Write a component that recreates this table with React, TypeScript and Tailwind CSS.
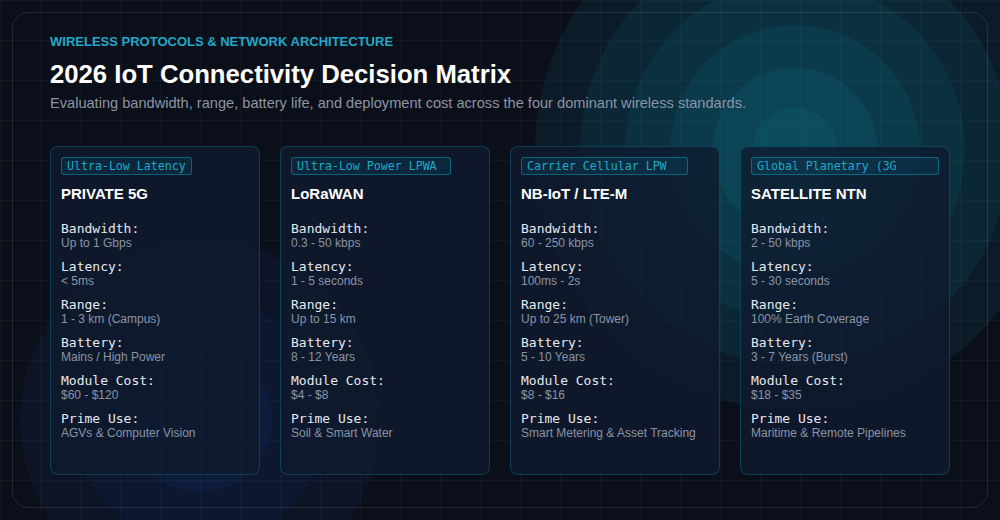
const protocols = [
  {
    tag: "Ultra-Low Latency",
    tagWidth: "w-[131px]",
    name: "PRIVATE 5G",
    specs: [
      ["Bandwidth:", "Up to 1 Gbps"],
      ["Latency:", "< 5ms"],
      ["Range:", "1 - 3 km (Campus)"],
      ["Battery:", "Mains / High Power"],
      ["Module Cost:", "$60 - $120"],
      ["Prime Use:", "AGVs & Computer Vision"],
    ],
  },
  {
    tag: "Ultra-Low Power LPWA",
    tagWidth: "w-[160px]",
    name: "LoRaWAN",
    specs: [
      ["Bandwidth:", "0.3 - 50 kbps"],
      ["Latency:", "1 - 5 seconds"],
      ["Range:", "Up to 15 km"],
      ["Battery:", "8 - 12 Years"],
      ["Module Cost:", "$4 - $8"],
      ["Prime Use:", "Soil & Smart Water"],
    ],
  },
  {
    tag: "Carrier Cellular LPW",
    tagWidth: "w-[167px]",
    name: "NB-IoT / LTE-M",
    specs: [
      ["Bandwidth:", "60 - 250 kbps"],
      ["Latency:", "100ms - 2s"],
      ["Range:", "Up to 25 km (Tower)"],
      ["Battery:", "5 - 10 Years"],
      ["Module Cost:", "$8 - $16"],
      ["Prime Use:", "Smart Metering & Asset Tracking"],
    ],
  },
  {
    tag: "Global Planetary (3G",
    tagWidth: "w-full",
    name: "SATELLITE NTN",
    specs: [
      ["Bandwidth:", "2 - 50 kbps"],
      ["Latency:", "5 - 30 seconds"],
      ["Range:", "100% Earth Coverage"],
      ["Battery:", "3 - 7 Years (Burst)"],
      ["Module Cost:", "$18 - $35"],
      ["Prime Use:", "Maritime & Remote Pipelines"],
    ],
  },
];

const tealRings = ["size-[520px]", "size-[430px]", "size-[340px]", "size-[250px]", "size-[165px]", "size-[85px]"];
const blueRings = ["size-[360px]", "size-[250px]", "size-[145px]"];

const mono = { fontFamily: '"DejaVu Sans Mono", monospace' };

const Card = ({ p }: { p: (typeof protocols)[number] }) => (
  <div className="h-[329px] w-[210px] rounded-lg border border-cyan-400/20 bg-[#0f1a2e]/80 p-[10px]">
    <div
      className={`${p.tagWidth} overflow-hidden whitespace-nowrap rounded-[3px] border border-cyan-400/35 bg-cyan-500/10 px-[5px] text-[11.6px] leading-[16px] text-[#1fa9c6]`}
      style={mono}
    >
      {p.tag}
    </div>
    <h2 className="mt-[9px] text-[15px] font-bold leading-[19px] text-white">{p.name}</h2>
    <div className="mt-[18px] flex flex-col gap-2">
      {p.specs.map(([label, value]) => (
        <div key={label}>
          <div className="text-[13px] leading-[15px] text-[#e5e9f0]" style={mono}>
            {label}
          </div>
          <div className="text-[12px] leading-[15px] text-[#8a94a6]">{value}</div>
        </div>
      ))}
    </div>
  </div>
);

export default function App() {
  return (
    <div
      className="relative h-[520px] w-[1000px] overflow-hidden bg-[#0b0f19] bg-[linear-gradient(rgba(255,255,255,0.03)_1px,transparent_1px),linear-gradient(90deg,rgba(255,255,255,0.03)_1px,transparent_1px)] bg-[size:40px_40px]"
      style={{ fontFamily: '"Liberation Sans", Arial, sans-serif' }}
    >
      {/* signal rings */}
      <div className="absolute left-[795px] top-[150px]">
        {tealRings.map((s) => (
          <div key={s} className={`absolute ${s} -translate-x-1/2 -translate-y-1/2 rounded-full bg-[rgba(20,184,210,0.075)]`} />
        ))}
      </div>
      <div className="absolute left-[200px] top-[420px]">
        {blueRings.map((s) => (
          <div key={s} className={`absolute ${s} -translate-x-1/2 -translate-y-1/2 rounded-full bg-[rgba(37,99,235,0.06)]`} />
        ))}
      </div>

      <div className="relative m-3 h-[496px] rounded-2xl border border-white/10 px-[37px] pt-[21px]">
        <p className="text-[13px] font-bold uppercase leading-[16px] text-[#22a7c8]">
          Wireless Protocols &amp; Network Architecture
        </p>
        <h1 className="mt-[9px] text-[25.7px] font-bold leading-[30px] text-white">2026 IoT Connectivity Decision Matrix</h1>
        <p className="mt-1 text-[14.6px] leading-5 text-[#8b95a5]">
          Evaluating bandwidth, range, battery life, and deployment cost across the four dominant wireless standards.
        </p>
        <div className="mt-[33px] flex gap-5">
          {protocols.map((p) => (
            <Card key={p.name} p={p} />
          ))}
        </div>
      </div>
    </div>
  );
}
